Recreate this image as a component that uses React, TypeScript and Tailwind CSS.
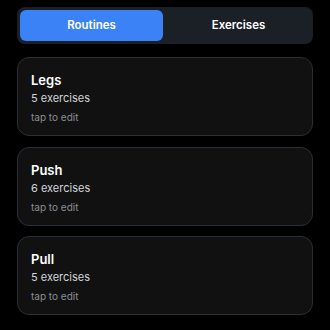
import { useState } from 'react'

const routines = [
    { name: 'Legs', count: 5 },
    { name: 'Push', count: 6 },
    { name: 'Pull', count: 5 },
]

export default function App() {
    const [tab, setTab] = useState<'routines' | 'exercises'>('routines')

    return (
        <div
            className="min-h-screen w-full bg-black px-[17px] pt-[7px] text-white"
            style={{ fontFamily: 'Inter, "Noto Sans", sans-serif' }}
        >
            <div className="flex gap-1 rounded-lg bg-[#1b1f26] p-[3px]">
                <button
                    onClick={() => setTab('routines')}
                    className={`h-[31px] flex-1 rounded-md text-[11.5px] font-semibold ${tab === 'routines' ? 'bg-[#3b82f6]' : ''}`}
                >
                    Routines
                </button>
                <button
                    onClick={() => setTab('exercises')}
                    className={`h-[31px] flex-1 rounded-md text-[11.5px] font-semibold ${tab === 'exercises' ? 'bg-[#3b82f6]' : ''}`}
                >
                    Exercises
                </button>
            </div>

            <div className="mt-[13px] flex flex-col gap-[10.5px]">
                {routines.map((r) => (
                    <div
                        key={r.name}
                        className="flex h-[79px] flex-col rounded-xl border border-[#2a2e37] bg-[#111111] px-[13px] pt-[14px]"
                    >
                        <div className="text-[13px] font-semibold leading-[16px]">{r.name}</div>
                        <div className="mt-[2px] text-[11px] leading-[16px] text-[#d4d6da]">
                            {r.count} exercises
                        </div>
                        <div className="mt-[4px] text-[10px] leading-[14px] text-[#8a8e96]">tap to edit</div>
                    </div>
                ))}
            </div>
        </div>
    )
}
